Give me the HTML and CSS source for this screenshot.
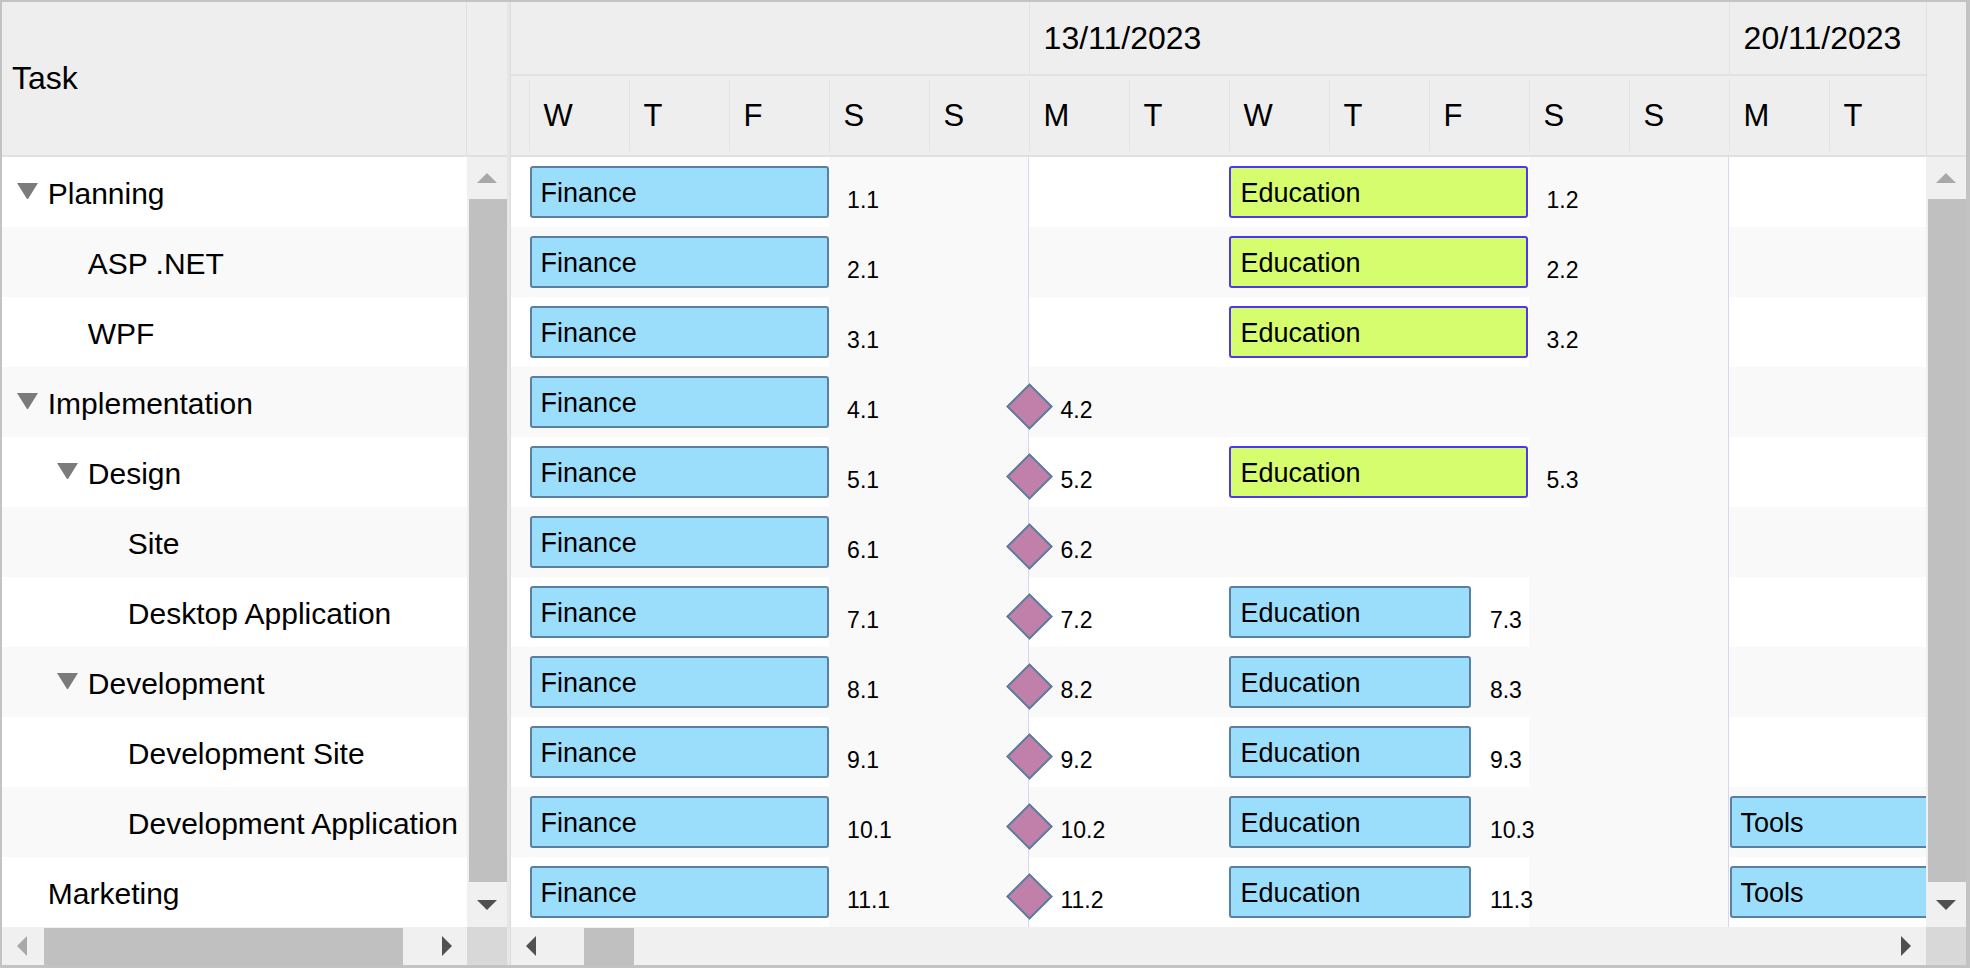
FILE: index.html
```html
<!DOCTYPE html>
<html lang="en">
<head>
<meta charset="UTF-8">
<title>Gantt</title>
<link rel="stylesheet" href="styles.css">
</head>
<body>

<div class="gantt">
    <div class="tree-pane">
        <div class="pane-head">
            <div class="task-head">Task</div>
            <div class="scroll-head"></div>
        </div>
        <div class="pane-main">
            <div class="tree-rows">
                <div class="tree-row lvl0"><span class="toggle open"></span>Planning</div>
                <div class="tree-row lvl1"><span class="toggle"></span>ASP .NET</div>
                <div class="tree-row lvl1"><span class="toggle"></span>WPF</div>
                <div class="tree-row lvl0"><span class="toggle open"></span>Implementation</div>
                <div class="tree-row lvl1"><span class="toggle open"></span>Design</div>
                <div class="tree-row lvl2"><span class="toggle"></span>Site</div>
                <div class="tree-row lvl2"><span class="toggle"></span>Desktop Application</div>
                <div class="tree-row lvl1"><span class="toggle open"></span>Development</div>
                <div class="tree-row lvl2"><span class="toggle"></span>Development Site</div>
                <div class="tree-row lvl2"><span class="toggle"></span>Development Application</div>
                <div class="tree-row lvl0"><span class="toggle"></span>Marketing</div>
            </div>
            <div class="vscroll">
                <div class="sb-btn up"><span class="arrow up off"></span></div>
                <div class="vthumb"></div>
                <div class="sb-btn down"><span class="arrow down"></span></div>
            </div>
        </div>
        <div class="pane-foot">
            <div class="hscroll">
                <div class="sb-btn"><span class="arrow left off"></span></div>
                <div class="hthumb"></div>
                <div class="sb-btn"><span class="arrow right"></span></div>
            </div>
            <div class="corner"></div>
        </div>
    </div>

    <div class="splitter"></div>

    <div class="chart-pane">
        <div class="pane-head">
            <div class="timescale">
                <div class="weeks">
                    <div class="week first"></div>
                    <div class="week">13/11/2023</div>
                    <div class="week">20/11/2023</div>
                </div>
                <div class="days">
                    <div class="day first"></div>
                    <div class="day">W</div>
                    <div class="day">T</div>
                    <div class="day">F</div>
                    <div class="day">S</div>
                    <div class="day">S</div>
                    <div class="day">M</div>
                    <div class="day">T</div>
                    <div class="day">W</div>
                    <div class="day">T</div>
                    <div class="day">F</div>
                    <div class="day">S</div>
                    <div class="day">S</div>
                    <div class="day">M</div>
                    <div class="day">T</div>
                </div>
            </div>
            <div class="scroll-head"></div>
        </div>
        <div class="pane-main">
            <div class="chart-body">
                <div class="chart-row">
                    <div class="bar finance">Finance<span class="bar-label">1.1</span></div>
                    <div class="bar edu green">Education<span class="bar-label">1.2</span></div>
                </div>
                <div class="chart-row">
                    <div class="bar finance">Finance<span class="bar-label">2.1</span></div>
                    <div class="bar edu green">Education<span class="bar-label">2.2</span></div>
                </div>
                <div class="chart-row">
                    <div class="bar finance">Finance<span class="bar-label">3.1</span></div>
                    <div class="bar edu green">Education<span class="bar-label">3.2</span></div>
                </div>
                <div class="chart-row">
                    <div class="bar finance">Finance<span class="bar-label">4.1</span></div>
                    <div class="milestone"><span class="ms-label">4.2</span></div>
                </div>
                <div class="chart-row">
                    <div class="bar finance">Finance<span class="bar-label">5.1</span></div>
                    <div class="milestone"><span class="ms-label">5.2</span></div>
                    <div class="bar edu green">Education<span class="bar-label">5.3</span></div>
                </div>
                <div class="chart-row">
                    <div class="bar finance">Finance<span class="bar-label">6.1</span></div>
                    <div class="milestone"><span class="ms-label">6.2</span></div>
                </div>
                <div class="chart-row">
                    <div class="bar finance">Finance<span class="bar-label">7.1</span></div>
                    <div class="milestone"><span class="ms-label">7.2</span></div>
                    <div class="bar edu short">Education<span class="bar-label">7.3</span></div>
                </div>
                <div class="chart-row">
                    <div class="bar finance">Finance<span class="bar-label">8.1</span></div>
                    <div class="milestone"><span class="ms-label">8.2</span></div>
                    <div class="bar edu short">Education<span class="bar-label">8.3</span></div>
                </div>
                <div class="chart-row">
                    <div class="bar finance">Finance<span class="bar-label">9.1</span></div>
                    <div class="milestone"><span class="ms-label">9.2</span></div>
                    <div class="bar edu short">Education<span class="bar-label">9.3</span></div>
                </div>
                <div class="chart-row">
                    <div class="bar finance">Finance<span class="bar-label">10.1</span></div>
                    <div class="milestone"><span class="ms-label">10.2</span></div>
                    <div class="bar edu short">Education<span class="bar-label">10.3</span></div>
                    <div class="bar tools">Tools</div>
                </div>
                <div class="chart-row">
                    <div class="bar finance">Finance<span class="bar-label">11.1</span></div>
                    <div class="milestone"><span class="ms-label">11.2</span></div>
                    <div class="bar edu short">Education<span class="bar-label">11.3</span></div>
                    <div class="bar tools">Tools</div>
                </div>
            </div>
            <div class="vscroll">
                <div class="sb-btn up"><span class="arrow up off"></span></div>
                <div class="vthumb"></div>
                <div class="sb-btn down"><span class="arrow down"></span></div>
            </div>
        </div>
        <div class="pane-foot">
            <div class="hscroll">
                <div class="sb-btn"><span class="arrow left"></span></div>
                <div class="hthumb"></div>
                <div class="sb-btn"><span class="arrow right"></span></div>
            </div>
            <div class="corner"></div>
        </div>
    </div>
</div>

</body>
</html>
```

FILE: styles.css
```css
* {
    box-sizing: border-box;
}

body {
    margin: 0;
    background-color: #ffffff;
    font-family: "Liberation Sans", Arial, sans-serif;
    color: #000000;
}

.gantt {
    display: flex;
    width: 1970px;
    height: 968px;
    border-style: solid;
    border-color: #c3c3c3;
    border-width: 2px 4px 3px 2px;
    overflow: hidden;
}

.tree-pane {
    flex: none;
    width: 505px;
    display: flex;
    flex-direction: column;
}

.splitter {
    flex: none;
    width: 4px;
    background-color: #e6e6e6;
    border-right: 1px solid #dcdcdc;
}

.chart-pane {
    flex: none;
    width: 1455px;
    display: flex;
    flex-direction: column;
}

/* header */
.pane-head {
    flex: none;
    display: flex;
    height: 155px;
    background-color: #eeeeee;
    border-bottom: 2px solid #e0e0e0;
}

.task-head {
    width: 465px;
    border-right: 1px solid #e0e0e0;
    padding-left: 10px;
    font-size: 32px;
    display: flex;
    align-items: center;
}

.scroll-head {
    width: 40px;
}

.chart-pane .scroll-head {
    border-left: 1px solid #e0e0e0;
}

.timescale {
    width: 1415px;
    display: flex;
    flex-direction: column;
    overflow: hidden;
}

.weeks {
    height: 74px;
    display: flex;
    border-bottom: 2px solid #e2e2e2;
}

.week {
    flex: none;
    width: 700px;
    border-left: 1px solid #e2e2e2;
    padding-left: 14px;
    font-size: 32px;
    display: flex;
    align-items: center;
}

.week.first {
    width: 517.6px;
    border-left: none;
}

.days {
    height: 79px;
    display: flex;
    padding: 4px 0;
}

.day {
    flex: none;
    width: 100px;
    border-left: 1px solid #e2e2e2;
    padding-left: 14px;
    font-size: 31px;
    display: flex;
    align-items: center;
}

.day.first {
    width: 17.6px;
    border-left: none;
}

/* body */
.pane-main {
    flex: none;
    height: 770px;
    display: flex;
}

.tree-rows {
    width: 465px;
}

.tree-row {
    height: 70px;
    display: flex;
    align-items: center;
    padding-top: 3px;
    font-size: 30px;
    white-space: nowrap;
}

.tree-row:nth-child(even) {
    background-color: #f9f9f9;
}

.lvl0 { padding-left: 14.7px; }
.lvl1 { padding-left: 54.7px; }
.lvl2 { padding-left: 94.7px; }

.toggle {
    flex: none;
    width: 21.6px;
    height: 16px;
    margin-right: 9.5px;
    margin-bottom: 5px;
}

.toggle.open {
    border-top: 16px solid #7b7b7b;
    border-left: 10.8px solid transparent;
    border-right: 10.8px solid transparent;
}

.chart-body {
    width: 1415px;
    height: 770px;
    overflow: hidden;
    background-color: #ffffff;
    background-image: linear-gradient(to right,
        transparent 317.6px, #f9f9f9 317.6px, #f9f9f9 517.6px, transparent 517.6px,
        transparent 1017.6px, #f9f9f9 1017.6px, #f9f9f9 1217.6px, transparent 1217.6px);
}

.chart-row {
    position: relative;
    height: 70px;
    background-image: linear-gradient(to right,
        transparent 517px, #d6d6f0 517px, #d6d6f0 518px, transparent 518px,
        transparent 1217px, #d6d6f0 1217px, #d6d6f0 1218px, transparent 1218px);
}

.chart-row:nth-child(even) {
    background-color: #f9f9f9;
}

.bar {
    position: absolute;
    top: 9px;
    height: 52px;
    border: 2px solid #5a7fa0;
    border-radius: 3px;
    background-color: #9adefc;
    padding-left: 9px;
    font-size: 27px;
    line-height: 51px;
    white-space: nowrap;
}

.bar.finance {
    left: 18.6px;
    width: 299px;
}

.bar.edu {
    left: 718.4px;
    width: 298.6px;
}

.bar.green {
    background-color: #d5fd6e;
    border-color: #4c38f2;
}

.bar.short {
    width: 242px;
}

.bar.tools {
    left: 1218.5px;
    width: 300px;
}

.bar-label,
.ms-label {
    position: absolute;
    font-size: 23px;
    line-height: 25px;
}

.bar-label {
    left: calc(100% + 20.5px);
    top: 20px;
}

.milestone {
    position: absolute;
    left: 495.8px;
    top: 16.5px;
    width: 41px;
    height: 41px;
}

.milestone::before {
    content: "";
    position: absolute;
    left: 6px;
    top: 6px;
    width: 29px;
    height: 29px;
    background-color: #c080aa;
    border: 2px solid #5a7fa0;
    transform: rotate(45deg);
}

.ms-label {
    left: 53.7px;
    top: 14.5px;
}

/* scrollbars */
.vscroll {
    flex: none;
    width: 40px;
    background-color: #f0f0f0;
    display: flex;
    flex-direction: column;
}

.sb-btn {
    flex: none;
    display: flex;
    align-items: center;
    justify-content: center;
}

.vscroll .sb-btn {
    height: 42px;
}

.vscroll .sb-btn.down {
    height: 45px;
}

.vthumb {
    height: 683px;
    margin-left: 2px;
    background-color: #c0c0c0;
}

.pane-foot {
    flex: none;
    height: 38px;
    display: flex;
}

.hscroll {
    display: flex;
    background-color: #f0f0f0;
}

.tree-pane .hscroll {
    width: 465px;
}

.chart-pane .hscroll {
    width: 1415px;
}

.hscroll .sb-btn {
    width: 40px;
}

.hthumb {
    margin-top: 1px;
    margin-right: auto;
    background-color: #c0c0c0;
}

.tree-pane .hthumb {
    margin-left: 2px;
    width: 359px;
}

.chart-pane .hthumb {
    margin-left: 33px;
    width: 50px;
}

.corner {
    width: 40px;
    background-color: #d8d8d8;
}

.arrow {
    --c: #505050;
    width: 0;
    height: 0;
    border-style: solid;
    border-color: transparent;
}

.arrow.off {
    --c: #a8a8a8;
}

.arrow.up {
    border-width: 0 10px 10px;
    border-bottom-color: var(--c);
}

.arrow.down {
    border-width: 10px 10px 0;
    border-top-color: var(--c);
}

.arrow.left {
    border-width: 10px 10px 10px 0;
    border-right-color: var(--c);
}

.arrow.right {
    border-width: 10px 0 10px 10px;
    border-left-color: var(--c);
}
```
